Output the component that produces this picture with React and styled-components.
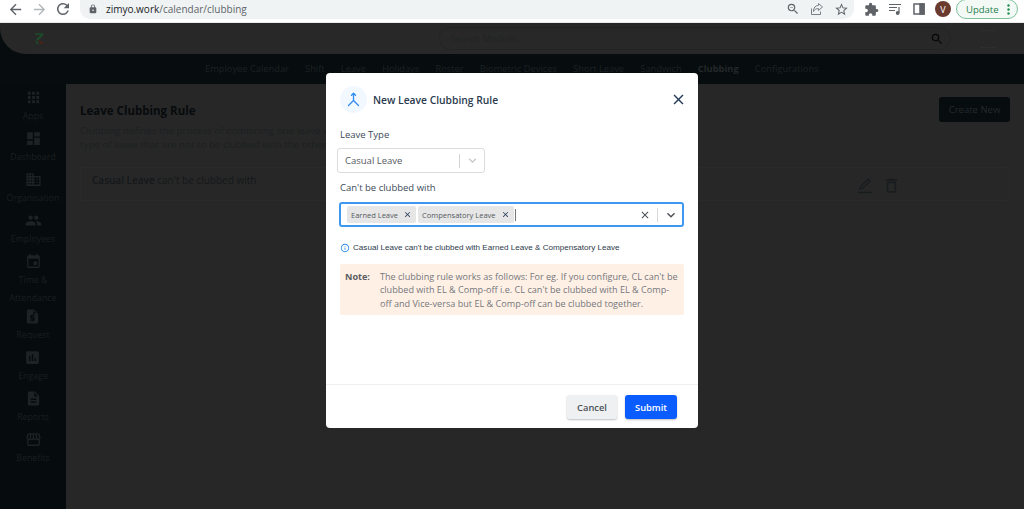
import React from "react";
import styled, { createGlobalStyle } from "styled-components";
import {
  MdApps, MdDashboard, MdDomain, MdPeople, MdEvent, MdRequestQuote, MdInsertChart, MdDescription,
  MdStorefront, MdSearch, MdArrowBack, MdArrowForward, MdRefresh, MdLock, MdExtension, MdStarBorder,
  MdZoomOut, MdClose, MdExpandMore, MdInfoOutline, MdOutlineDelete,
} from "react-icons/md";

const GlobalStyle = createGlobalStyle`
  html, body { margin: 0; padding: 0; height: 100%; background: #272727; }
  body { font-family: "Open Sans", "Noto Sans", sans-serif; overflow: hidden; }
  * { box-sizing: border-box; }
`;

const sideItems = [
  { icon: MdApps, label: ["Apps"] },
  { icon: MdDashboard, label: ["Dashboard"] },
  { icon: MdDomain, label: ["Organisation"] },
  { icon: MdPeople, label: ["Employees"] },
  { icon: MdEvent, label: ["Time &", "Attendance"] },
  { icon: MdRequestQuote, label: ["Request"] },
  { icon: MdInsertChart, label: ["Engage"] },
  { icon: MdDescription, label: ["Reports"] },
  { icon: MdStorefront, label: ["Benefits"] },
];

const tabs = ["Employee Calendar", "Shift", "Leave", "Holidays", "Roster", "Biometric Devices", "Short Leave", "Sandwich", "Clubbing", "Configurations"];

const App = () => {
  return (
    <Page>
      <GlobalStyle />
      <BrowserBar>
        <NavIcon><MdArrowBack size={17} /></NavIcon>
        <NavIcon $faded><MdArrowForward size={17} /></NavIcon>
        <NavIcon><MdRefresh size={18} /></NavIcon>
        <UrlPill>
          <MdLock size={10} color="#5f6368" />
          <Url>zimyo.work<UrlPath>/calendar/clubbing</UrlPath></Url>
          <PillIcons>
            <MdZoomOut size={14} />
            <svg width="14" height="14" viewBox="0 0 14 14" fill="none" stroke="#7a7f84" strokeWidth="1">
              <path d="M1.5 6.5v6h9v-3" />
              <path d="M8.5 1.5l4 3.5-4 3.5V6.6C6 6.6 4.5 7.5 3.5 9.5c0-4 2-6 5-6.2z" />
            </svg>
            <MdStarBorder size={15} />
          </PillIcons>
        </UrlPill>
        <ToolIcons>
          <MdExtension size={15} color="#5f6368" />
          <svg width="14" height="12" viewBox="0 0 14 12" fill="none" stroke="#5f6368" strokeWidth="1.2">
            <path d="M0 1.5h12M0 4.5h8M0 7.5h6M10 4v6" />
            <circle cx="8.7" cy="10" r="1.3" fill="#5f6368" />
          </svg>
          <svg width="12" height="12" viewBox="0 0 12 12" fill="none" stroke="#5f6368" strokeWidth="1.5">
            <rect x="1" y="1" width="10" height="10" />
            <rect x="7" y="1" width="4" height="10" fill="#5f6368" />
          </svg>
          <Avatar>V</Avatar>
        </ToolIcons>
        <UpdateButton>
          Update
          <svg width="3" height="11" viewBox="0 0 3 11" fill="#1e8e4e">
            <circle cx="1.5" cy="1.5" r="1.2" />
            <circle cx="1.5" cy="5.5" r="1.2" />
            <circle cx="1.5" cy="9.5" r="1.2" />
          </svg>
        </UpdateButton>
      </BrowserBar>

      <AppFrame>
        <HeaderBand>
          <Header>
            <Logo viewBox="0 0 14 14" fill="none">
              <path d="M2 2h8" stroke="#1d4a2a" strokeWidth="1.6" />
              <path d="M10 2L4 8" stroke="#1d4a2a" strokeWidth="2.2" />
              <path d="M6 9l4 3" stroke="#4a2216" strokeWidth="2" />
              <path d="M3 9l2 3" stroke="#1d4a2a" strokeWidth="1.6" />
            </Logo>
            <SearchBox>
              Search Module...
              <MdSearch size={14} color="#050709" />
            </SearchBox>
            <HeaderMark />
          </Header>
          <TabStrip>
            {tabs.map((t) => (
              <Tab key={t} $active={t === "Clubbing"}>{t}</Tab>
            ))}
          </TabStrip>
        </HeaderBand>

        <Body>
          <Sidebar>
            {sideItems.map(({ icon: Icon, label }) => (
              <SideItem key={label[0]}>
                <Icon size={17} />
                {label.map((l) => <SideLabel key={l}>{l}</SideLabel>)}
              </SideItem>
            ))}
          </Sidebar>
          <Content>
            <TopRow>
              <div>
                <PageTitle>Leave Clubbing Rule</PageTitle>
                <PageText>
                  Clubbing defines the process of combining one leave with<br />
                  type of leave that are not to be clubbed with the other leav
                </PageText>
              </div>
              <CreateButton>Create New</CreateButton>
            </TopRow>
            <RuleCard>
              <span><RuleName>Casual Leave</RuleName> can't be clubbed with</span>
              <RuleIcons>
                <svg width="17" height="17" viewBox="0 0 17 17" fill="none" stroke="currentColor" strokeWidth="1.2">
                  <path d="M3 12l1-3 7-7 2 2-7 7-3 1z" />
                  <path d="M1 15.5h14" strokeWidth="1.4" />
                </svg>
                <MdOutlineDelete size={19} />
              </RuleIcons>
            </RuleCard>
          </Content>
        </Body>
      </AppFrame>

      <Modal>
        <ModalBody>
          <ModalHeader>
            <IconCircle>
              <svg width="13" height="15" viewBox="0 0 13 15" fill="none" stroke="#2f8cf5" strokeWidth="1.3" strokeLinecap="round" strokeLinejoin="round">
                <path d="M6.5 1.2v7.3M1.5 13.5l5-5 5 5M4.5 3.2l2-2 2 2" />
              </svg>
            </IconCircle>
            <ModalTitle>New Leave Clubbing Rule</ModalTitle>
            <CloseIcon><MdClose size={17} /></CloseIcon>
          </ModalHeader>

          <FieldLabel>Leave Type</FieldLabel>
          <SingleSelect>
            <SelectValue>Casual Leave</SelectValue>
            <Divider $light />
            <MdExpandMore size={15} color="#c4c6c9" />
          </SingleSelect>

          <SecondLabel>Can't be clubbed with</SecondLabel>
          <MultiSelect>
            <Chip>Earned Leave <MdClose size={9} color="#243a5a" /></Chip>
            <Chip>Compensatory Leave <MdClose size={9} color="#243a5a" /></Chip>
            <Caret />
            <ClearIcon><MdClose size={12} color="#4a4f55" /></ClearIcon>
            <Divider />
            <MdExpandMore size={16} color="#4a4f55" />
          </MultiSelect>

          <InfoLine>
            <MdInfoOutline size={10} color="#2f8cf5" />
            Casual Leave can't be clubbed with Earned Leave &amp; Compensatory Leave
          </InfoLine>

          <NoteBox>
            <NoteLabel>Note:</NoteLabel>
            <NoteText>
              The clubbing rule works as follows: For eg. If you configure, CL can't be clubbed with EL &amp; Comp-off i.e. CL can't be clubbed with EL &amp; Comp-off and Vice-versa but EL &amp; Comp-off can be clubbed together.
            </NoteText>
          </NoteBox>
        </ModalBody>
        <ModalFooter>
          <CancelButton>Cancel</CancelButton>
          <SubmitButton>Submit</SubmitButton>
        </ModalFooter>
      </Modal>
    </Page>
  );
};

export default App;

// Styled components
const Page = styled.div`
  width: 1024px;
  height: 509px;
  display: flex;
  flex-direction: column;
  position: relative;
  overflow: hidden;
`;

const BrowserBar = styled.div`
  height: 23px;
  flex: none;
  background: #fff;
  display: flex;
  align-items: center;
  padding: 0 0 4px 3px;
  border-bottom: 1px solid #e8eaed;
`;

const NavIcon = styled.div`
  width: 24px;
  display: flex;
  justify-content: center;
  color: ${(p) => (p.$faded ? "#b4b7ba" : "#5f6368")};
`;

const UrlPill = styled.div`
  width: 774px;
  height: 20px;
  margin-left: 5px;
  padding: 0 5px 0 8px;
  background: #eff3f4;
  border-radius: 0 0 10px 10px;
  display: flex;
  align-items: center;
  gap: 8px;
`;

const Url = styled.span`
  flex: 1;
  font-size: 10px;
  color: #202124;
`;

const UrlPath = styled.span`
  color: #5f6368;
`;

const PillIcons = styled.div`
  display: flex;
  align-items: center;
  gap: 10px;
  color: #5f6368;
`;

const ToolIcons = styled.div`
  display: flex;
  align-items: center;
  gap: 10px;
  margin-left: 10px;
`;

const Avatar = styled.div`
  width: 16px;
  height: 16px;
  border-radius: 50%;
  background: #6a3a2e;
  color: #fff;
  font-size: 9px;
  display: flex;
  align-items: center;
  justify-content: center;
`;

const UpdateButton = styled.div`
  width: 62px;
  height: 20px;
  margin-left: 5px;
  padding: 0 7px 0 9px;
  border: 1px solid #7cc09c;
  border-radius: 10px;
  font-size: 9.5px;
  color: #1e7e4a;
  background: #f3faf6;
  display: flex;
  align-items: center;
  justify-content: space-between;
`;

const AppFrame = styled.div`
  flex: 1;
  display: flex;
  flex-direction: column;
  min-height: 0;
`;

const HeaderBand = styled.div`
  flex: none;
  background: #070c0e;
`;

const Header = styled.div`
  height: 31px;
  background: #282828;
  border-bottom-left-radius: 26px;
  display: flex;
  align-items: center;
  padding: 0 0 0 33px;
`;

const Logo = styled.svg`
  width: 14px;
  height: 14px;
`;

const SearchBox = styled.div`
  width: 512px;
  height: 23px;
  margin-left: 392px;
  padding: 0 6px 0 10px;
  border: 1px solid #242424;
  border-radius: 12px;
  font-size: 9.5px;
  color: #202425;
  display: flex;
  align-items: center;
  justify-content: space-between;
`;

const HeaderMark = styled.div`
  width: 14px;
  height: 18px;
  margin-left: 30px;
  border-top: 1px dotted #333;
  border-bottom: 1px dotted #333;
`;

const TabStrip = styled.div`
  height: 30px;
  padding: 0 0 2px 205px;
  display: flex;
  align-items: center;
  gap: 16.2px;
`;

const Tab = styled.span`
  font-size: 9.3px;
  font-weight: ${(p) => (p.$active ? 700 : 400)};
  color: ${(p) => (p.$active ? "#23282a" : "#1c2224")};
`;

const Body = styled.div`
  flex: 1;
  display: flex;
  min-height: 0;
`;

const Sidebar = styled.div`
  width: 66px;
  flex: none;
  background: #060b0d;
  padding-top: 4.5px;
  display: flex;
  flex-direction: column;
  align-items: center;
  gap: 7px;
`;

const SideItem = styled.div`
  display: flex;
  flex-direction: column;
  align-items: center;
  color: #1d2224;
`;

const SideLabel = styled.span`
  font-size: 8.8px;
  line-height: 13px;
  color: #1a1f21;
  margin-top: 4px;
  &:nth-of-type(2) {
    margin-top: 5px;
    margin-bottom: -4px;
  }
`;

const Content = styled.div`
  flex: 1;
  background: #272727;
  padding: 19px 14px 0 14px;
`;

const TopRow = styled.div`
  display: flex;
  justify-content: space-between;
  align-items: flex-start;
`;

const PageTitle = styled.div`
  font-size: 11.5px;
  font-weight: 700;
  line-height: 16px;
  color: #070b0d;
`;

const PageText = styled.div`
  margin-top: 5px;
  font-size: 9.8px;
  line-height: 14px;
  color: #1c2022;
  white-space: nowrap;
`;

const CreateButton = styled.div`
  width: 71px;
  height: 25px;
  margin-top: -6px;
  background: #070c0e;
  border-radius: 3px;
  font-size: 9.5px;
  color: #252a2c;
  display: flex;
  align-items: center;
  justify-content: center;
`;

const RuleCard = styled.div`
  height: 34px;
  margin-top: 15px;
  padding: 5px 91px 0 11px;
  border: 1px solid #2a2a2a;
  border-radius: 3px;
  display: flex;
  align-items: flex-start;
  justify-content: space-between;
  font-size: 10px;
  line-height: 14px;
  color: #14181a;
`;

const RuleName = styled.span`
  font-weight: 600;
`;

const RuleIcons = styled.div`
  display: flex;
  align-items: center;
  gap: 8px;
  margin: 3px 17px 0 0;
  color: #181c1e;
`;

const Modal = styled.div`
  position: absolute;
  left: 326px;
  top: 73px;
  width: 372px;
  height: 355px;
  background: #fff;
  border-radius: 4px;
  display: flex;
  flex-direction: column;
`;

const ModalBody = styled.div`
  flex: 1;
  padding: 13px 14px 0 14px;
`;

const ModalHeader = styled.div`
  display: flex;
  align-items: center;
  gap: 6px;
`;

const IconCircle = styled.div`
  width: 27px;
  height: 27px;
  border-radius: 50%;
  background: #f2f8ff;
  display: flex;
  align-items: center;
  justify-content: center;
`;

const ModalTitle = styled.div`
  flex: 1;
  font-size: 10.3px;
  font-weight: 600;
  color: #2b3a4e;
`;

const CloseIcon = styled.div`
  display: flex;
  color: #243a5a;
  margin-right: -3px;
`;

const FieldLabel = styled.div`
  margin-top: 15px;
  font-size: 9.5px;
  line-height: 14px;
  color: #3c4a5a;
`;

const SecondLabel = styled(FieldLabel)`
  margin-top: 8px;
`;

const SingleSelect = styled.div`
  width: 148px;
  height: 25px;
  margin: 6px 0 0 -3px;
  padding: 0 4px 0 7px;
  border: 1px solid #dcdcdc;
  border-radius: 3px;
  display: flex;
  align-items: center;
`;

const SelectValue = styled.span`
  flex: 1;
  font-size: 9.5px;
  color: #55595e;
`;

const Divider = styled.span`
  width: 1px;
  height: 14px;
  background: ${(p) => (p.$light ? "#d4d4d4" : "#d8d8d8")};
  margin: 0 ${(p) => (p.$light ? "5px" : "3px")} 0 4px;
`;

const MultiSelect = styled.div`
  height: 25px;
  margin: 7px 0 0 -1px;
  padding: 0 3px 0 6px;
  border: 2px solid #3f98f0;
  border-radius: 3px;
  display: flex;
  align-items: center;
  gap: 2px;
`;

const Chip = styled.span`
  height: 17px;
  padding: 0 4px;
  background: #e6e6e6;
  border-radius: 2px;
  font-size: 7.5px;
  color: #55595e;
  display: flex;
  align-items: center;
  gap: 5px;
`;

const Caret = styled.span`
  width: 1px;
  height: 12px;
  margin-left: -1px;
  background: #777;
`;

const ClearIcon = styled.span`
  margin-left: auto;
  display: flex;
`;

const InfoLine = styled.div`
  margin-top: 15px;
  display: flex;
  align-items: center;
  gap: 3px;
  font-family: "Liberation Sans", Arial, sans-serif;
  font-size: 8.1px;
  line-height: 12px;
  color: #2e3a4c;
`;

const NoteBox = styled.div`
  margin-top: 10px;
  height: 51px;
  padding: 6px 6px 0 5px;
  background: #fff0e6;
  border-radius: 2px;
  display: flex;
  gap: 10px;
  font-size: 9.1px;
  line-height: 13.4px;
`;

const NoteLabel = styled.span`
  font-weight: 700;
  color: #5a5e62;
`;

const NoteText = styled.span`
  flex: 1;
  color: #73777b;
`;

const ModalFooter = styled.div`
  height: 44px;
  flex: none;
  padding: 10px 21px 0 0;
  border-top: 1px solid #f0f0f0;
  display: flex;
  justify-content: flex-end;
  gap: 8px;
`;

const CancelButton = styled.div`
  width: 50px;
  height: 24px;
  background: #eef0f2;
  border-radius: 3px;
  box-shadow: 0 1px 2px rgba(0, 0, 0, 0.25);
  font-size: 9.3px;
  font-weight: 600;
  color: #4a5058;
  display: flex;
  align-items: center;
  justify-content: center;
`;

const SubmitButton = styled(CancelButton)`
  width: 52px;
  background: #0a5cff;
  color: #fff;
`;
